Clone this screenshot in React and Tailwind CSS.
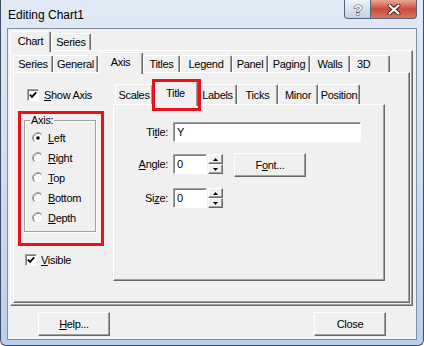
import clsx from 'clsx'

const FONT = "font-['Liberation_Sans',Arial,sans-serif]"

const RAISED =
  'border border-t-white border-l-white border-r-[#696969] border-b-[#696969] bg-[#f0f0f0] shadow-[inset_-1px_-1px_0_#a0a0a0]'
const PAGE =
  'border border-t-white border-l-white border-r-[#696969] border-b-[#696969] shadow-[inset_-1px_-1px_0_#a0a0a0]'
const SUNKEN =
  'border border-t-[#a0a0a0] border-l-[#a0a0a0] border-r-white border-b-white bg-white shadow-[inset_1px_1px_0_#7a7a7a]'

const chartTabs = [
  { label: 'Chart', w: 'w-[41px]', selected: true },
  { label: 'Series', w: 'w-[40px]' },
]

const axisTabs = [
  { label: 'Series', w: 'w-[40px]' },
  { label: 'General', w: 'w-[45px]' },
  { label: 'Axis', w: 'w-[45px]', selected: true },
  { label: 'Titles', w: 'w-[37px]' },
  { label: 'Legend', w: 'w-[52px]' },
  { label: 'Panel', w: 'w-[36px]' },
  { label: 'Paging', w: 'w-[42px]' },
  { label: 'Walls', w: 'w-[40px]' },
  { label: '3D', w: 'w-[40px]', pad: 'justify-start pl-[6px]' },
]

const titleTabs = [
  { label: 'Scales', w: 'w-[38px]' },
  { label: 'Title', w: 'w-[45px]', selected: true, marked: true },
  { label: 'Labels', w: 'w-[39px]' },
  { label: 'Ticks', w: 'w-[41px]' },
  { label: 'Minor', w: 'w-[40px]' },
  { label: 'Position', w: 'w-[42px]' },
]

const axes = [
  { pre: '', u: 'L', rest: 'eft', checked: true },
  { pre: '', u: 'R', rest: 'ight' },
  { pre: '', u: 'T', rest: 'op' },
  { pre: '', u: 'B', rest: 'ottom' },
  { pre: '', u: 'D', rest: 'epth' },
]

function U({ children }) {
  return <span className="underline decoration-1 underline-offset-[1px]">{children}</span>
}

function TabRow({ tabs, rowH, selH, unselH, className }) {
  return (
    <div className={clsx('flex items-end', rowH, className)}>
      {tabs.map((t) => (
        <div
          key={t.label}
          className={clsx(
            'relative flex shrink-0 items-center rounded-t-[2px] border-x border-t border-l-white border-t-white border-r-[#696969] bg-[#f0f0f0] shadow-[inset_-1px_0_0_#a0a0a0]',
            t.w,
            t.pad ?? 'justify-center',
            t.selected ? clsx(selH, 'z-10 -mb-[2px] pb-[2px]') : unselH
          )}
        >
          {t.label}
          {t.marked && (
            <div className="pointer-events-none absolute -top-[3px] -left-[2px] h-[32px] w-[49px] border-[3px] border-[#e8111c]" />
          )}
        </div>
      ))}
    </div>
  )
}

function CheckBox() {
  return (
    <span className={clsx('flex h-[12px] w-[12px] shrink-0 items-center justify-center', SUNKEN)}>
      <svg width="8" height="8" viewBox="0 0 8 8">
        <path d="M0.8 3.6 L3 5.8 L7.2 1.4" fill="none" stroke="#000" strokeWidth="1.9" />
      </svg>
    </span>
  )
}

function Radio({ checked }) {
  return (
    <svg width="12" height="12" viewBox="0 0 12 12" className="shrink-0">
      <circle cx="6" cy="6" r="5.5" fill="#fff" />
      <path d="M2.11 9.89 A5.5 5.5 0 0 1 9.89 2.11" fill="none" stroke="#a0a0a0" />
      <path d="M2.82 9.18 A4.5 4.5 0 0 1 9.18 2.82" fill="none" stroke="#8a8a8a" />
      <path d="M9.18 2.82 A4.5 4.5 0 0 1 2.82 9.18" fill="none" stroke="#e3e3e3" />
      {checked && <circle cx="6" cy="6" r="1.8" fill="#000" />}
    </svg>
  )
}

function Spinner() {
  return (
    <div className="ml-[1px] flex h-[20px] w-[15px] flex-col">
      <div className={clsx('flex h-[10px] items-center justify-center', RAISED)}>
        <svg width="5" height="3" viewBox="0 0 5 3">
          <path d="M2.5 0 L5 3 L0 3 Z" fill="#000" />
        </svg>
      </div>
      <div className={clsx('flex h-[10px] items-center justify-center', RAISED)}>
        <svg width="5" height="3" viewBox="0 0 5 3">
          <path d="M0 0 L5 0 L2.5 3 Z" fill="#000" />
        </svg>
      </div>
    </div>
  )
}

function Field({ w, value }) {
  return (
    <div className={clsx('flex h-[20px] items-center pl-[3px]', w, SUNKEN)}>{value}</div>
  )
}

function Button({ children, className }) {
  return (
    <div className={clsx('flex h-[24px] w-[72px] items-center justify-center', RAISED, className)}>
      {children}
    </div>
  )
}

export default function App() {
  return (
    <div
      className={clsx(
        'h-[346px] w-[424px] overflow-hidden bg-white text-[11px] leading-none tracking-[-0.3px] text-black',
        FONT
      )}
    >
      <div className="flex h-[346px] w-[424px] flex-col rounded-b-[6px] border-x border-b border-[#3d4e66] bg-gradient-to-b from-[#e1eaf5] via-[#cfdeef] to-[#b9d0ea]">
        {/* title bar */}
        <div className="flex h-[28px] shrink-0">
          <span className="self-center pt-[2px] pl-[7px] text-[12px] tracking-normal">Editing Chart1</span>
          <div className="mr-[6px] ml-auto flex h-[19px]">
            <div className="flex w-[27px] items-center justify-center rounded-bl-[4px] border border-t-0 border-[#52637b] bg-gradient-to-b from-[#eef3f9] to-[#c3d1e3]">
              <svg width="12" height="15" viewBox="0 0 12 15">
                <text
                  x="6"
                  y="13"
                  textAnchor="middle"
                  fontSize="15"
                  fontWeight="700"
                  fontFamily="Liberation Sans, Arial, sans-serif"
                  fill="#eef2f7"
                  stroke="#3e4d62"
                  strokeWidth="1"
                  paintOrder="stroke"
                >
                  ?
                </text>
              </svg>
            </div>
            <div className="flex w-[46px] items-center justify-center rounded-br-[4px] border border-t-0 border-l-0 border-[#52637b] bg-gradient-to-b from-[#e8a897] via-[#c84a3c] to-[#d97560]">
              <svg width="14" height="11" viewBox="0 0 14 11">
                <path d="M2.5 1.5 L11.5 9.5 M11.5 1.5 L2.5 9.5" stroke="#4a1d1d" strokeWidth="4" strokeLinecap="round" />
                <path d="M2.5 1.5 L11.5 9.5 M11.5 1.5 L2.5 9.5" stroke="#fff" strokeWidth="2.2" strokeLinecap="round" />
              </svg>
            </div>
          </div>
        </div>

        {/* client area */}
        <div className="ml-[6px] flex h-[312px] w-[410px] flex-col border border-[#7d90a8] bg-[#f0f0f0]">
          <div className="px-[2px] pt-[2px]">
            <TabRow tabs={chartTabs} rowH="h-[19px]" selH="h-[21px]" unselH="h-[17px]" />
            <div className={clsx(PAGE, 'h-[256px] w-[403px]')}>
              <TabRow
                tabs={axisTabs}
                rowH="h-[20px]"
                selH="h-[22px]"
                unselH="h-[17px]"
                className="mt-[1px] ml-[2px]"
              />
              <div className={clsx(PAGE, 'ml-[2px] flex h-[231px] w-[397px]')}>
                {/* left column */}
                <div className="flex w-[99px] shrink-0 flex-col">
                  <div className="mt-[16px] flex h-[12px] items-center gap-[5px] pl-[13px]">
                    <CheckBox />
                    <span>
                      <U>S</U>how Axis
                    </span>
                  </div>
                  <div className="relative mt-[19px] ml-[10px] h-[112px] w-[72px] border border-[#a0a0a0] shadow-[inset_1px_1px_0_#fff,1px_1px_0_#fff]">
                    <span className="absolute -top-[6px] left-[5px] bg-[#f0f0f0] px-[1px]">Axis:</span>
                    <div className="flex flex-col gap-[8px] pt-[11px] pl-[7px]">
                      {axes.map((a) => (
                        <div key={a.u} className="flex h-[12px] items-center gap-[4px]">
                          <Radio checked={a.checked} />
                          <span>
                            <U>{a.u}</U>
                            {a.rest}
                          </span>
                        </div>
                      ))}
                    </div>
                    <div className="pointer-events-none absolute -top-[10px] -left-[7px] h-[135px] w-[86px] border-[3px] border-[#e8111c]" />
                  </div>
                  <div className="mt-[22px] flex h-[12px] items-center gap-[4px] pl-[11px]">
                    <CheckBox />
                    <span>
                      <U>V</U>isible
                    </span>
                  </div>
                </div>

                {/* right column */}
                <div className="flex flex-col pt-[8px]">
                  <TabRow
                    tabs={titleTabs}
                    rowH="h-[23px]"
                    selH="h-[25px]"
                    unselH="h-[20px] pt-[1px]"
                    className="pl-[2px]"
                  />
                  <div className={clsx(PAGE, 'h-[177px] w-[272px]')}>
                    <div className="mt-[17px] flex h-[20px] items-center">
                      <span className="w-[54px] text-right">
                        Ti<U>t</U>le:
                      </span>
                      <div className="ml-[5px]">
                        <Field w="w-[188px]" value="Y" />
                      </div>
                    </div>
                    <div className="mt-[12px] flex h-[20px] items-center">
                      <span className="w-[54px] text-right">
                        <U>A</U>ngle:
                      </span>
                      <div className="ml-[5px]">
                        <Field w="w-[34px]" value="0" />
                      </div>
                      <Spinner />
                      <Button className="-mt-[1px] ml-[11px] self-start">
                        <span>
                          F<U>o</U>nt...
                        </span>
                      </Button>
                    </div>
                    <div className="mt-[14px] flex h-[20px] items-center">
                      <span className="w-[54px] text-right">
                        Si<U>z</U>e:
                      </span>
                      <div className="ml-[5px]">
                        <Field w="w-[34px]" value="0" />
                      </div>
                      <Spinner />
                    </div>
                  </div>
                </div>
              </div>
            </div>
          </div>

          {/* dialog buttons */}
          <div className="mt-[6px] flex justify-between px-[30px]">
            <Button>
              <span>
                <U>H</U>elp...
              </span>
            </Button>
            <Button>Close</Button>
          </div>
        </div>
      </div>
    </div>
  )
}
